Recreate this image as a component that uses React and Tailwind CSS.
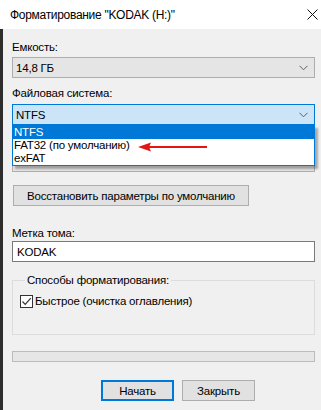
import React from 'react'

function Chevron() {
  return (
    <svg width="9" height="6" viewBox="0 0 9 6" className="shrink-0">
      <path d="M0.5 0.8 L4.5 4.8 L8.5 0.8" fill="none" stroke="#606060" strokeWidth="1" />
    </svg>
  )
}

function Combo({ value, focused = false }) {
  return (
    <div
      className={`h-[21px] flex items-center justify-between pl-[3px] pr-[6px] border ${
        focused ? 'bg-[#cce4f7] border-[#0078d7]' : 'bg-[#e5e5e5] border-[#adadad]'
      }`}
    >
      <span className="leading-[16px]">{value}</span>
      <Chevron />
    </div>
  )
}

function Label({ children, className = '' }) {
  return <div className={`leading-[16px] whitespace-nowrap ${className}`}>{children}</div>
}

export default function App() {
  const options = ['NTFS', 'FAT32 (по умолчанию)', 'exFAT']

  return (
    <div className="w-[321px] h-[410px] bg-[#f0f0f0] overflow-hidden relative font-['Liberation_Sans',Arial,sans-serif] text-[11.5px] tracking-[-0.2px] text-black">
      <div className="h-[29px] bg-white flex items-center justify-between pl-[10px] pr-[2px]">
        <span className="leading-[16px] text-[12px] tracking-[-0.3px]">Форматирование "KODAK (H:)"</span>
        <svg width="11" height="11" viewBox="0 0 11 11" className="mr-[1px]">
          <path d="M0.5 0.5 L10.5 10.5 M10.5 0.5 L0.5 10.5" stroke="#111" strokeWidth="1" />
        </svg>
      </div>

      <div className="flex h-[381px]">
        <div className="w-[3px] bg-[#2d2d2d]" />
        <div className="flex-1 pl-[9px] pr-[6px] pt-[10px] flex flex-col">
          <Label>Емкость:</Label>
          <div className="mt-[2px]">
            <Combo value="14,8 ГБ" />
          </div>

          <Label className="mt-[7px]">Файловая система:</Label>
          <div className="mt-[3px] relative">
            <Combo value="NTFS" focused />
            <div className="absolute left-0 right-0 top-full z-10 bg-white border border-[#0078d7] shadow-[3px_3px_2px_rgba(0,0,0,0.3)]">
              {options.map((o, i) => (
                <div
                  key={o}
                  className={`h-[13px] flex items-center pl-[1px] leading-[13px] whitespace-nowrap ${
                    i === 0 ? 'bg-[#0078d7] text-white' : ''
                  }`}
                >
                  {o}
                </div>
              ))}
              <svg width="72" height="12" viewBox="0 0 72 12" className="absolute left-[124px] top-[15px]">
                <path d="M1 6 L14 1.5 L12.5 4.9 L70 4.9 L70 7.1 L12.5 7.1 L14 10.5 Z" fill="#e41515" />
              </svg>
            </div>
          </div>

          {/* combo hidden under the open list */}
          <div className="mt-[26px] h-[21px] bg-[#e5e5e5] border border-[#adadad]" />

          <button
            type="button"
            className="mt-[13px] ml-[1px] w-[236px] h-[21px] bg-[#e1e1e1] border border-[#adadad] leading-[16px] whitespace-nowrap"
          >
            Восстановить параметры по умолчанию
          </button>

          <Label className="mt-[19px]">Метка тома:</Label>
          <div className="h-[21px] bg-white border border-[#7a7a7a] flex items-center pl-[4px] leading-[16px]">
            KODAK
          </div>

          <fieldset className="mt-[10px] border border-[#dcdcdc] pl-[7px] pt-[5px] pb-[25px]">
            <legend className="ml-[5px] px-[2px] leading-[16px]">Способы форматирования:</legend>
            <label className="flex items-center gap-[2px] h-[16px]">
              <span className="w-[13px] h-[13px] bg-white border border-[#333] flex items-center justify-center">
                <svg width="11" height="11" viewBox="0 0 11 11">
                  <path d="M1.5 5.5 L4.2 8.3 L9.8 2.2" fill="none" stroke="#333" strokeWidth="1.2" />
                </svg>
              </span>
              <span className="leading-[16px]">Быстрое (очистка оглавления)</span>
            </label>
          </fieldset>

          <div className="mt-[16px] h-[11px] bg-[#e6e6e6] border border-[#bcbcbc]" />

          <div className="mt-[18px] ml-[89px] flex gap-[8px]">
            <button
              type="button"
              className="w-[73px] h-[21px] bg-[#e1e1e1] border-2 border-[#0078d7] leading-[16px]"
            >
              Начать
            </button>
            <button
              type="button"
              className="w-[73px] h-[21px] bg-[#e1e1e1] border border-[#adadad] leading-[16px]"
            >
              Закрыть
            </button>
          </div>
        </div>
      </div>
    </div>
  )
}
